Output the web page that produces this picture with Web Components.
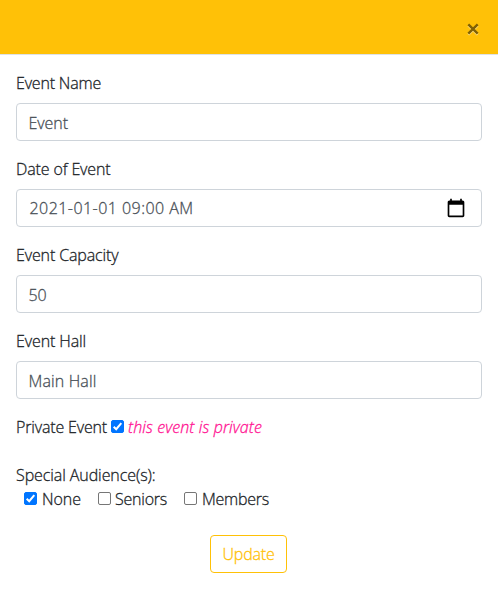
<!DOCTYPE html>
<html lang="en"><head><meta charset="utf-8"><title>Event</title>
<style>
html,body{margin:0;background:#fff}
body{font:300 16px/24px "Open Sans","Noto Sans",sans-serif;color:#212529;-webkit-text-stroke:.3px currentColor}
</style></head><body>
<event-dialog></event-dialog>
<script>
const define = (name, html, setup) => customElements.define(name, class extends HTMLElement {
  connectedCallback() {
    if (this.shadowRoot) return;
    const root = this.attachShadow({mode: 'open'});
    root.innerHTML = html;
    if (setup) setup(this, root);
  }
});

// Single-line text whose tracking is adjusted to a given advance width.
define('fit-text', `<style>:host{display:inline-block;white-space:nowrap;flex:none}span{display:inline-block;-webkit-text-stroke:.3px currentColor}</style><span><slot></slot></span>`,
  (host, root) => {
    const span = root.querySelector('span');
    const target = Number(host.getAttribute('w'));
    const natural = span.getBoundingClientRect().width;
    span.style.letterSpacing = (target - natural) / host.textContent.length + 'px';
    host.style.width = target + 'px';
  });

define('dialog-header', `<style>
:host{display:flex;box-sizing:border-box;height:55px;background:#ffc107;border-bottom:1px solid #dee2e6;justify-content:flex-end;align-items:center;padding:4px 19px 0 0}
svg{display:block;overflow:visible}
</style><svg width="12" height="12" viewBox="0 0 12 12" fill="none" stroke-width="2.4"><path d="M1.3 2.3l9.4 9.4M10.7 2.3l-9.4 9.4" stroke="#fff" stroke-opacity=".5"/><path d="M1.3 1.3l9.4 9.4M10.7 1.3l-9.4 9.4" stroke="#806104"/></svg>`);

define('form-field', `<style>
:host{display:block;margin-bottom:16px}
.label{height:24px;margin-bottom:8px}
.box{display:flex;align-items:center;justify-content:space-between;box-sizing:border-box;height:38px;border:1px solid #ced4da;border-radius:4px;padding:2px 12px 0 11.5px;color:#495057}
</style><div class="label"><slot name="label"></slot></div><div class="box"><slot></slot><slot name="icon"></slot></div>`);

define('calendar-icon', `<style>:host{display:block;width:20px;height:20px;margin:-3px 3px 0 0}svg{display:block}</style>
<svg width="20" height="20" viewBox="0 0 24 24"><path d="M20 3h-1V1h-2v2H7V1H5v2H4c-1.1 0-2 .9-2 2v16c0 1.1.9 2 2 2h16c1.1 0 2-.9 2-2V5c0-1.1-.9-2-2-2zm0 18H4V8h16v13z" fill="#000"/></svg>`);

define('check-box', `<style>
:host{display:block;flex:none;box-sizing:border-box;width:13px;height:13px;border:1px solid #767676;border-radius:2px;background:#fff}
:host([checked]){background:#0075ff;border-color:#0075ff}
svg{display:none;margin:-1px}:host([checked]) svg{display:block}
</style><svg width="13" height="13" viewBox="0 0 13 13"><path d="M2.7 6.7l2.5 2.5 5.1-6" fill="none" stroke="#fff" stroke-width="2"/></svg>`);

define('check-row', `<style>:host{display:flex;height:24px;align-items:center}::slotted(check-box){margin-top:-1px}</style><slot></slot>`);

define('update-button', `<style>
:host{display:block;width:77px;margin:24px auto 0;position:relative;left:-.5px}
button{display:flex;justify-content:center;align-items:center;box-sizing:border-box;width:77px;height:38px;border:1px solid #ffc107;border-radius:4px;background:transparent;color:#ffc107;font:inherit;padding:0}
</style><button><slot></slot></button>`);

define('event-dialog', `<style>
:host{display:block;height:604px;overflow:hidden}
main{padding:16px}
.hint{color:#ff1493;font-style:italic;margin-left:4px}
.special{margin-top:24px;height:24px}
.audience{padding-left:8px}
.audience fit-text{margin-left:5px}
</style>
<dialog-header></dialog-header>
<main>
<form-field><fit-text slot="label" w="85">Event Name</fit-text><fit-text w="39.5">Event</fit-text></form-field>
<form-field><fit-text slot="label" w="94.5">Date of Event</fit-text><fit-text w="164" style="margin:-2px 0 0 1px">2021-01-01 09:00 AM</fit-text><calendar-icon slot="icon"></calendar-icon></form-field>
<form-field><fit-text slot="label" w="102.5">Event Capacity</fit-text><fit-text w="18">50</fit-text></form-field>
<form-field><fit-text slot="label" w="70">Event Hall</fit-text><fit-text w="68">Main Hall</fit-text></form-field>
<check-row><fit-text w="91">Private Event</fit-text><check-box checked style="margin-left:4px"></check-box><fit-text class="hint" w="134">this event is private</fit-text></check-row>
<div class="special"><fit-text w="139.5">Special Audience(s):</fit-text></div>
<check-row class="audience"><check-box checked></check-box><fit-text w="39">None</fit-text><check-box style="margin-left:17px"></check-box><fit-text w="52" style="margin-left:4px">Seniors</fit-text><check-box style="margin-left:17px"></check-box><fit-text w="67">Members</fit-text></check-row>
<update-button><fit-text w="52">Update</fit-text></update-button>
</main>`);
</script>
</body></html>
